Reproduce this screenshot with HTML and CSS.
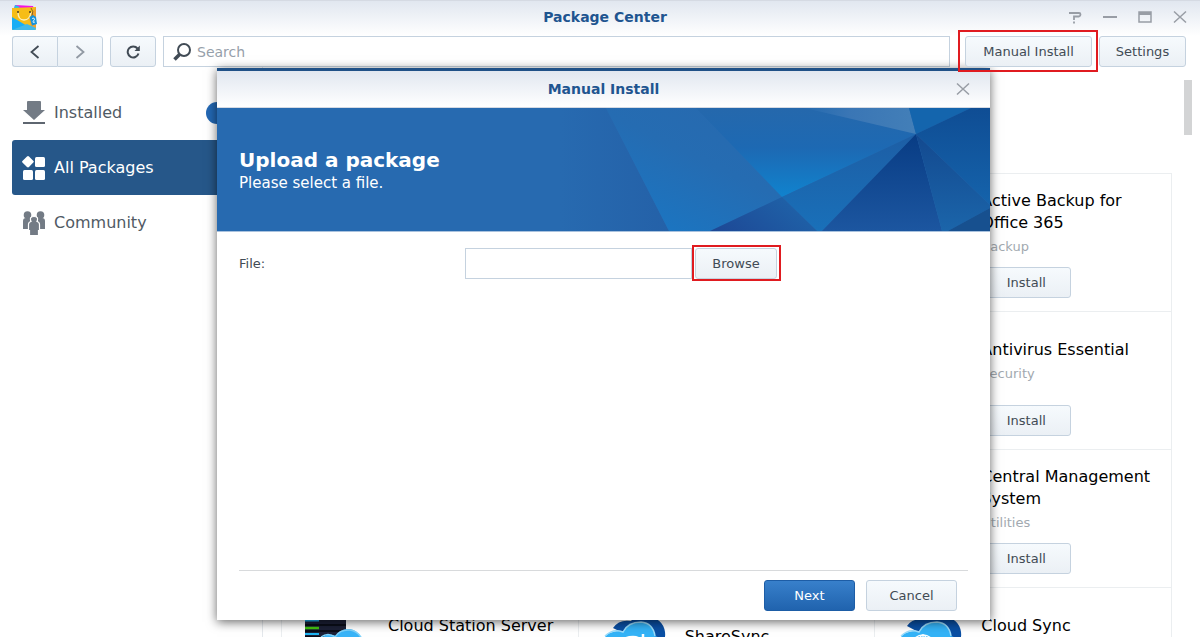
FILE: index.html
```html
<!DOCTYPE html>
<html lang="en">
<head>
<meta charset="utf-8">
<title>Package Center</title>
<link rel="stylesheet" href="styles.css">
</head>
<body>
<div class="window">
  <header class="titlebar">
    <svg class="app-icon" viewBox="0 0 26 26" aria-hidden="true">
      <path d="M2 5 3 1l18 1 1 3z" fill="#f312e4"/>
      <path d="M3 1l5 2-3 2H2z" fill="#18c6ee"/>
      <path d="M0 4l24-1v22q0 1-1 1H1q-1 0-1-1z" fill="#f6bd17"/>
      <path d="M24 3v21l-4 2-3-12z" fill="#f0a12c"/>
      <path d="M0 13l17 10-4 3H1q-1 0-1-1z" fill="#19aef5"/>
      <path d="M0 26l15-6 9 4q0 2-1 2z" fill="#42b9e7"/>
      <path d="M6 8q0 8 6 8t7-8" fill="none" stroke="#fff0b8" stroke-width="1.300"/>
      <circle cx="6" cy="8" r="1" fill="#4a3a1c"/><circle cx="18" cy="8" r="1" fill="#4a3a1c"/>
      <path d="M19 4q3 3 1 8" fill="none" stroke="#6a4b20" stroke-width=".8"/>
      <path d="M17.500 13l3.500-2 3 2 1 7-5 1.500z" fill="#1593dc"/>
      <path d="M20 14.500l2-.5.5 2-1.500 1 .3 1.500 1.700-.5" fill="none" stroke="#fff" stroke-width=".8"/>
    </svg>
    <h1 class="title">Package Center</h1>
    <div class="window-controls">
      <button class="icon-button" aria-label="Help"><svg viewBox="0 0 14 14"><path d="M1 3h10q1.500 0 1.500 1.500T11 6.500H6V10M6 11.500v2" fill="none" stroke="#989da5" stroke-width="1.800"/></svg></button>
      <button class="icon-button" aria-label="Minimize"><svg viewBox="0 0 14 14"><path d="M0 7h14" stroke="#989da5" stroke-width="2"/></svg></button>
      <button class="icon-button" aria-label="Maximize"><svg viewBox="0 0 14 14"><path d="M1 2h12v10H1z" fill="none" stroke="#989da5" stroke-width="1.500"/><path d="M1 2h12v3H1z" fill="#989da5"/></svg></button>
      <button class="icon-button" aria-label="Close"><svg viewBox="0 0 14 14"><path d="M1 1.500l12 11M13 1.500l-12 11" stroke="#989da5" stroke-width="1.500"/></svg></button>
    </div>
  </header>

  <div class="toolbar">
    <div class="nav-group">
      <button class="button nav" aria-label="Back"><svg viewBox="0 0 10 14"><path d="M8.500 1l-7 6 7 6" fill="none" stroke="#414b55" stroke-width="1.800"/></svg></button>
      <button class="button nav" aria-label="Forward"><svg viewBox="0 0 10 14"><path d="M1.500 1l7 6-7 6" fill="none" stroke="#9199a3" stroke-width="1.800"/></svg></button>
    </div>
    <button class="button refresh" aria-label="Refresh"><svg viewBox="0 0 14 14"><path d="M11.500 3.500A5.500 5.500 0 1 0 12.500 8.500" fill="none" stroke="#414b55" stroke-width="2"/><path d="M13.800 0.500v5.500H8.500z" fill="#414b55"/></svg></button>
    <label class="search">
      <svg viewBox="0 0 18 18" aria-hidden="true"><circle cx="11" cy="7" r="6" fill="none" stroke="#414b55" stroke-width="2"/><path d="M6.500 11.500L1.500 16.500" stroke="#414b55" stroke-width="3.500"/></svg>
      <input type="text" placeholder="Search" aria-label="Search">
    </label>
    <div class="marked marked-install"><button class="button">Manual Install</button></div>
    <button class="button">Settings</button>
  </div>

  <div class="body">
    <nav class="sidebar">
      <a class="side-item" href="#installed">
        <svg viewBox="0 0 24 24" aria-hidden="true"><path d="M5 1q0-1 1-1h12q1 0 1 1v8h4L12 19 1 9h4z" fill="#737b85"/><path d="M1 21h22v2H1z" fill="#5e6670"/></svg>
        <span>Installed</span><i class="badge"></i>
      </a>
      <a class="side-item active" href="#all">
        <svg viewBox="0 0 24 24" aria-hidden="true" fill="#fff"><path d="M6 0q.6 0 1 .5L11.500 5q.5.700 0 1.300L7 11q-1 .9-2 0L.4 6.400q-.6-.7 0-1.400L5 .5Q5.500 0 6 0z"/><rect x="13" y="1" width="10" height="10" rx="1.500"/><rect x="1" y="14" width="10" height="10" rx="1.500"/><rect x="13" y="14" width="10" height="10" rx="1.500"/></svg>
        <span>All Packages</span>
      </a>
      <a class="side-item" href="#community">
        <svg viewBox="0 0 24 24" aria-hidden="true" fill="#737b85"><circle cx="5.500" cy="4" r="3.800"/><circle cx="18.500" cy="4" r="3.800"/><path d="M1 18v-8q0-3 3-3h4v11zM23 18v-8q0-3-3-3h-4v11z"/><path d="M7.500 24.500v-5H6.500v-6q0-2.500 2.500-3-2-5 3-5t3 5q2.500.5 2.500 3v6h-1v5z" fill="#737b85" stroke="#fff" stroke-width="1.200"/></svg>
        <span>Community</span>
      </a>
    </nav>

    <main class="content">
      <section class="grid">
        <article class="card"></article>
        <article class="card"></article>
        <article class="card">
          <div class="info"><h2>Active Backup for Office 365</h2><p>Backup</p></div>
          <button class="button install">Install</button>
        </article>
        <article class="card"></article>
        <article class="card"></article>
        <article class="card">
          <div class="info"><h2>Antivirus Essential</h2><p>Security</p></div>
          <button class="button install">Install</button>
        </article>
        <article class="card"></article>
        <article class="card"></article>
        <article class="card">
          <div class="info"><h2>Central Management System</h2><p>Utilities</p></div>
          <button class="button install">Install</button>
        </article>
        <article class="card">
          <svg class="pkg" viewBox="0 0 64 64" aria-hidden="true">
            <path d="M-1 0h41v64H-1z" fill="#1c2036"/>
            <path d="M-1 13h41M-1 19h41M-1 25h41" stroke="#05070f" stroke-width="1.500"/>
            <path d="M-1 8.500h14M-1 22h14" stroke="#1fb4f2" stroke-width="2"/><path d="M-1 16h14" stroke="#42c40f" stroke-width="2.500"/>
            <path d="M12 40q0-15 9-17 6-1 9 1 5-8 14-7 11 2 13 16v30H12z" fill="#39b4f8"/>
            <path d="M15 25q7-5 14 0 5-8 15-7 8 1 12 9" fill="none" stroke="#7ed2fb" stroke-width="1.500"/>
          </svg>
          <div class="info"><h2>Cloud Station Server</h2></div>
        </article>
        <article class="card">
          <svg class="pkg" viewBox="0 0 64 64" aria-hidden="true">
            <path d="M10 16q6-9 18-7 4-6 15-5 17 2 19 16 1 8-4 12l-20-2z" fill="#0a4fa4"/>
            <path d="M0 36q-1-14 10-16 6-2 10 0 5-10 18-10 12 1 14 14 8 2 10 12v20H0z" fill="#34b3f7"/>
            <path d="M2 24q8-8 18-4 5-10 18-10 12 1 14 14" fill="none" stroke="#9adcfb" stroke-width="1.500"/>
            <path d="M16 34q3-9 14-9 5 0 8 3M40 22v8h-9" fill="none" stroke="#fff" stroke-width="2.500"/>
          </svg>
          <div class="info"><h2>Cloud Station ShareSync</h2></div>
        </article>
        <article class="card">
          <svg class="pkg" viewBox="0 0 64 64" aria-hidden="true">
            <path d="M8 14q6-9 18-6 6-5 17-4 17 2 19 16 1 8-4 12l-20-2z" fill="#0a4fa4"/>
            <path d="M0 36q-1-14 10-16 6-2 10 0 5-10 18-10 12 1 14 14 8 2 10 12v20H0z" fill="#34b3f7"/>
            <path d="M2 24q8-8 18-4 5-10 18-10 12 1 14 14" fill="none" stroke="#9adcfb" stroke-width="1.500"/>
            <g fill="none" stroke="#fff" stroke-width="1.300"><circle cx="24" cy="35" r="12"/><ellipse cx="24" cy="35" rx="5" ry="12"/><path d="M24 23v24M12 34h24M15 28h18"/></g>
            <circle cx="45" cy="39" r="12" fill="#f8bd32" stroke="#fff" stroke-width="1.500"/>
          </svg>
          <div class="info"><h2>Cloud Sync</h2></div>
        </article>
      </section>
      <div class="scrollbar"></div>
    </main>
  </div>

  <section class="dialog" role="dialog" aria-labelledby="dialog-title">
    <header class="dialog-header">
      <h2 class="title" id="dialog-title">Manual Install</h2>
      <button class="icon-button dialog-close" aria-label="Close dialog"><svg viewBox="0 0 14 14"><path d="M1 1.500l12 11M13 1.500l-12 11" stroke="#989da5" stroke-width="1.500"/></svg></button>
    </header>
    <div class="banner">
      <div class="banner-text">
        <h3>Upload a package</h3>
        <p>Please select a file.</p>
      </div>
      <svg class="facets" viewBox="0 0 430 123" preserveAspectRatio="xMaxYMid slice" aria-hidden="true">
        <defs>
          <linearGradient id="a"><stop offset="0" stop-color="#276ab0"/><stop offset="1" stop-color="#2461a8"/></linearGradient>
          <linearGradient id="b" x1="1" y1="0" x2=".3" y2="1"><stop offset="0" stop-color="#2869ae"/><stop offset=".5" stop-color="#256cb2"/><stop offset="1" stop-color="#1b75c1"/></linearGradient>
          <linearGradient id="c" x1="0" y1="0" x2="0" y2="1"><stop offset="0" stop-color="#2568ac"/><stop offset=".45" stop-color="#1d69b3"/><stop offset="1" stop-color="#1083ce"/></linearGradient>
          <linearGradient id="d"><stop offset="0" stop-color="#246aaf"/><stop offset=".4" stop-color="#3a76b5"/><stop offset="1" stop-color="#437fb8"/></linearGradient>
          <linearGradient id="e" x1="0" y1="0" x2="0" y2="1"><stop offset="0" stop-color="#0f4d94"/><stop offset="1" stop-color="#1563ab"/></linearGradient>
          <linearGradient id="f" x1="0" y1="0" x2="0" y2="1"><stop offset="0" stop-color="#1d5ea5"/><stop offset="1" stop-color="#1970b9"/></linearGradient>
          <linearGradient id="g" x1="0" y1="1" x2="1" y2=".6"><stop offset="0" stop-color="#1d4795"/><stop offset="1" stop-color="#1f62a8"/></linearGradient>
          <linearGradient id="h" x1="0" y1="0" x2="0" y2="1"><stop offset="0" stop-color="#083c84"/><stop offset="1" stop-color="#1c56a0"/></linearGradient>
          <linearGradient id="i" x1="0" y1="0" x2="0" y2="1"><stop offset="0" stop-color="#13498f"/><stop offset="1" stop-color="#1b65aa"/></linearGradient>
        </defs>
        <path d="M0 0h46l63 123H0z" fill="url(#a)"/>
        <path d="M46 0h92l84 89-72 34h-41z" fill="url(#b)"/>
        <path d="M136 0h109l111 26-134 63z" fill="url(#c)"/>
        <path d="M245 0h104l7 26z" fill="url(#d)"/>
        <path d="M349 0h62l-55 26z" fill="#1465ad"/>
        <path d="M411 0h19v97l-74-71z" fill="url(#e)"/>
        <path d="M356 26L222 89l35 34h5z" fill="url(#f)"/>
        <path d="M222 89l35 34H150z" fill="url(#g)"/>
        <path d="M356 26l-94 97h120z" fill="url(#h)"/>
        <path d="M356 26l26 97h6l42-23v-3z" fill="url(#i)"/>
        <path d="M388 123l42-23v23z" fill="#17508f"/>
      </svg>
    </div>
    <form class="dialog-body">
      <label class="file-label" for="file">File:</label>
      <input class="file-input" id="file" type="text">
      <div class="marked marked-browse"><button class="button browse" type="button">Browse</button></div>
    </form>
    <footer class="dialog-footer">
      <button class="button primary">Next</button>
      <button class="button">Cancel</button>
    </footer>
  </section>
</div>
</body>
</html>
```
FILE: styles.css
```css
* { box-sizing: border-box; }

body {
  margin: 0;
  font-family: Verdana, "DejaVu Sans", sans-serif;
  font-size: 13px;
  color: #414b55;
  background: #fff;
}

h1, h2, h3, p { margin: 0; font-weight: normal; }

.window {
  position: relative;
  display: flex;
  flex-direction: column;
  height: 100vh;
  overflow: hidden;
}

.titlebar {
  display: flex;
  align-items: center;
  height: 36px;
  flex: none;
  padding: 0 13px 3px 12px;
  border-top: 1px solid #d5dae3;
  background: linear-gradient(#e1e7f0, #fff);
}

.app-icon { width: 26px; height: 26px; margin-right: 52px; }

.title {
  flex: 1;
  text-align: center;
  font-size: 14px;
  font-weight: bold;
  color: #1f5590;
}

.window-controls { display: flex; gap: 21px; margin-left: -52px; }

.icon-button { display: block; padding: 0; border: 0; background: none; }
.icon-button svg { display: block; width: 14px; height: 14px; }

.toolbar {
  display: flex;
  flex: none;
  height: 31px;
  padding: 0 14px 0 12px;
}

.button {
  height: 31px;
  padding: 0 15px;
  font: inherit;
  color: #414b55;
  border: 1px solid #c5d2df;
  border-radius: 3px;
  background: linear-gradient(#f6fafd, #ebf0f5);
}

.nav-group { display: flex; }
.nav { width: 46px; display: grid; place-items: center; padding: 0; }
.nav svg { width: 10px; height: 14px; }
.nav:first-child { width: 45px; border-radius: 3px 0 0 3px; border-right: 0; }
.nav:last-child { border-radius: 0 3px 3px 0; }
.refresh { width: 46px; display: grid; place-items: center; padding: 0; margin: 0 7px; }
.refresh svg { width: 14px; height: 14px; }

.search {
  display: flex;
  flex: 1;
  align-items: center;
  gap: 6px;
  margin-right: 15px;
  padding-left: 9px;
  border: 1px solid #c5d2df;
}
.search svg { width: 18px; height: 18px; }
.search input { flex: 1; height: 27px; padding: 0; border: 0; outline: 0; font: inherit; font-size: 14px; }
.search input::placeholder { color: #96a0aa; }

.marked { position: relative; z-index: 3; }
.marked::after {
  content: "";
  position: absolute;
  inset: -6px -6px -5px -7px;
  border: 2px solid #e01b20;
  pointer-events: none;
}
.marked-install { margin-right: 7px; }
.marked-install .button { width: 127px; }
.toolbar > .button:last-child { width: 87px; padding: 0; }

.body { display: flex; flex: 1; min-height: 0; }

.sidebar { width: 262px; flex: none; padding: 18px 12px 0; }

.side-item {
  display: flex;
  align-items: center;
  gap: 8px;
  height: 55px;
  padding: 0 10px;
  border-radius: 3px;
  font-size: 16px;
  color: #505a64;
  text-decoration: none;
}
.side-item svg { width: 24px; height: 24px; }
.side-item.active { color: #fff; background: #265789; }
.badge { width: 34px; height: 22px; margin-left: auto; border-radius: 11px; background: #2368b4; }

.content {
  display: flex;
  flex: 1;
  align-items: flex-start;
  border-left: 1px solid #e4e8ec;
  padding-right: 8px;
}

.grid {
  display: grid;
  grid-template-columns: repeat(3, 1fr);
  grid-auto-rows: 138px;
  flex: 1;
  margin: 106px 12px 0 18px;
  border: 1px solid #ebeef0;
  border-width: 1px 0 0 1px;
}

.card {
  display: grid;
  grid-template-columns: 64px 1fr;
  grid-template-rows: 87px 31px;
  column-gap: 18px;
  padding: 6px 20px 0 24px;
  border: 1px solid #ebeef0;
  border-width: 0 1px 1px 0;
}
.pkg { grid-row: 1 / 3; width: 64px; height: 64px; margin-top: 18px; overflow: visible; }
.info { grid-column: 2; grid-row: 1; display: flex; flex-direction: column; justify-content: center; }
.info h2 { font-size: 16px; line-height: 22px; color: #000; }
.info h2:last-child { margin-bottom: 24px; }
.info p { margin-top: 2px; line-height: 22px; color: #a2a9b0; }
.install { grid-column: 2; grid-row: 2; width: 90px; }

.scrollbar { width: 8px; height: 55px; margin-top: 13px; background: #d3d4d5; }

.dialog {
  position: absolute;
  z-index: 2;
  inset: 68px 210px 17px 217px;
  display: flex;
  flex-direction: column;
  border-top: 3px solid #205187;
  background: #fff;
  box-shadow: 0 2px 10px rgba(0, 0, 0, .6);
}

.dialog-header {
  display: flex;
  align-items: center;
  height: 37px;
  flex: none;
  padding-right: 20px;
  background: linear-gradient(#e1e7f0, #fff);
  border-bottom: 1px solid #d5dae3;
}
.dialog-header .title { padding-left: 34px; }

.banner {
  display: flex;
  flex: none;
  justify-content: space-between;
  height: 124px;
  color: #fff;
  background: #276ab0;
  border-bottom: 1px solid #a9c2de;
}
.banner-text { padding: 40px 0 0 22px; }
.banner-text h3 { font-size: 20px; line-height: 24px; font-weight: bold; }
.banner-text p { font-size: 15px; line-height: 22px; }
.facets { width: 430px; height: 123px; }

.dialog-body { display: flex; flex: 1; align-items: flex-start; padding: 16px 22px 0; }
.file-label { width: 226px; line-height: 31px; }
.file-input { width: 227px; height: 31px; padding: 0 8px; border: 1px solid #c5d2df; font: inherit; }
.marked-browse { margin-left: 3px; }
.marked-browse::after { inset: -3px -4px -2px -3px; }
.browse { width: 82px; }

.dialog-footer {
  display: flex;
  justify-content: flex-end;
  gap: 11px;
  margin: 0 22px;
  padding: 9px 11px 9px 0;
  border-top: 1px solid #d8dadc;
}
.dialog-footer .button { width: 91px; }
.dialog-footer .primary {
  color: #fff;
  border-color: #1d5da6;
  background: linear-gradient(#3880cb, #2063ae);
}
```
